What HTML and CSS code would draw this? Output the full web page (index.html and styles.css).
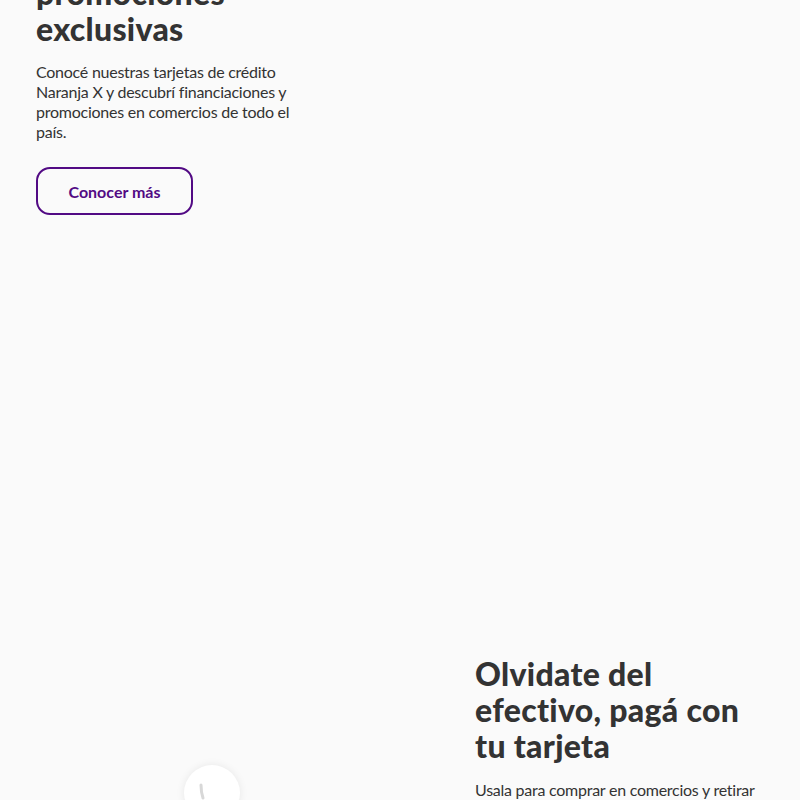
FILE: index.html
```html
<!DOCTYPE html>
<html lang="es">
<head>
<meta charset="utf-8">
<title>Naranja X</title>
<link rel="stylesheet" href="styles.css">
</head>
<body>
<main class="page">
  <section class="promo">
    <h2 class="title">Tarjetas con<br>promociones<br>exclusivas</h2>
    <p class="text">Conocé nuestras tarjetas de crédito Naranja X y descubrí financiaciones y promociones en comercios de todo el país.</p>
    <a class="btn" href="#">Conocer más</a>
  </section>
  <section class="cash">
    <div class="media">
      <div class="bubble">
        <svg width="56" height="56" viewBox="0 0 56 56"><path d="M17 20 C 17 26, 18 30, 19 33" stroke="#d8d8d8" stroke-width="3" fill="none" stroke-linecap="round"/></svg>
      </div>
    </div>
    <div class="copy">
      <h2 class="title">Olvidate del efectivo, pagá con tu tarjeta</h2>
      <p class="text">Usala para comprar en comercios y retirar efectivo en cajeros de todo el país.</p>
    </div>
  </section>
</main>
</body>
</html>
```

FILE: styles.css
```css
html, body {
  margin: 0;
  padding: 0;
  background: #fafafa;
  overflow: hidden;
}
body {
  font-family: Lato, "Open Sans", sans-serif;
  color: #333333;
}
.page {
  padding: 0 36px;
}
.promo {
  margin-top: -61px;
  width: 270px;
}
.title {
  font-size: 32px;
  line-height: 36px;
  font-weight: 900;
  margin: 0;
  letter-spacing: 0.3px;
}
.text {
  font-size: 16px;
  line-height: 20px;
  margin: 15px 0 0;
  letter-spacing: -0.25px;
}
.btn {
  display: inline-flex;
  align-items: center;
  justify-content: center;
  box-sizing: border-box;
  margin-top: 25px;
  width: 157px;
  height: 48px;
  border: 2px solid #520a84;
  border-radius: 14px;
  color: #520a84;
  font-weight: 700;
  font-size: 16px;
  text-decoration: none;
}
.cash {
  margin-top: 441px;
  display: grid;
  grid-template-columns: 1fr 289px;
  column-gap: 35px;
}
.media {
  padding-top: 109px;
  padding-left: 148px;
}
.bubble {
  width: 56px;
  height: 56px;
  border-radius: 50%;
  background: #ffffff;
  box-shadow: 0 0 8px rgba(0, 0, 0, 0.08);
}
.bubble svg {
  display: block;
}
.copy .text {
  margin-top: 16px;
}
```
